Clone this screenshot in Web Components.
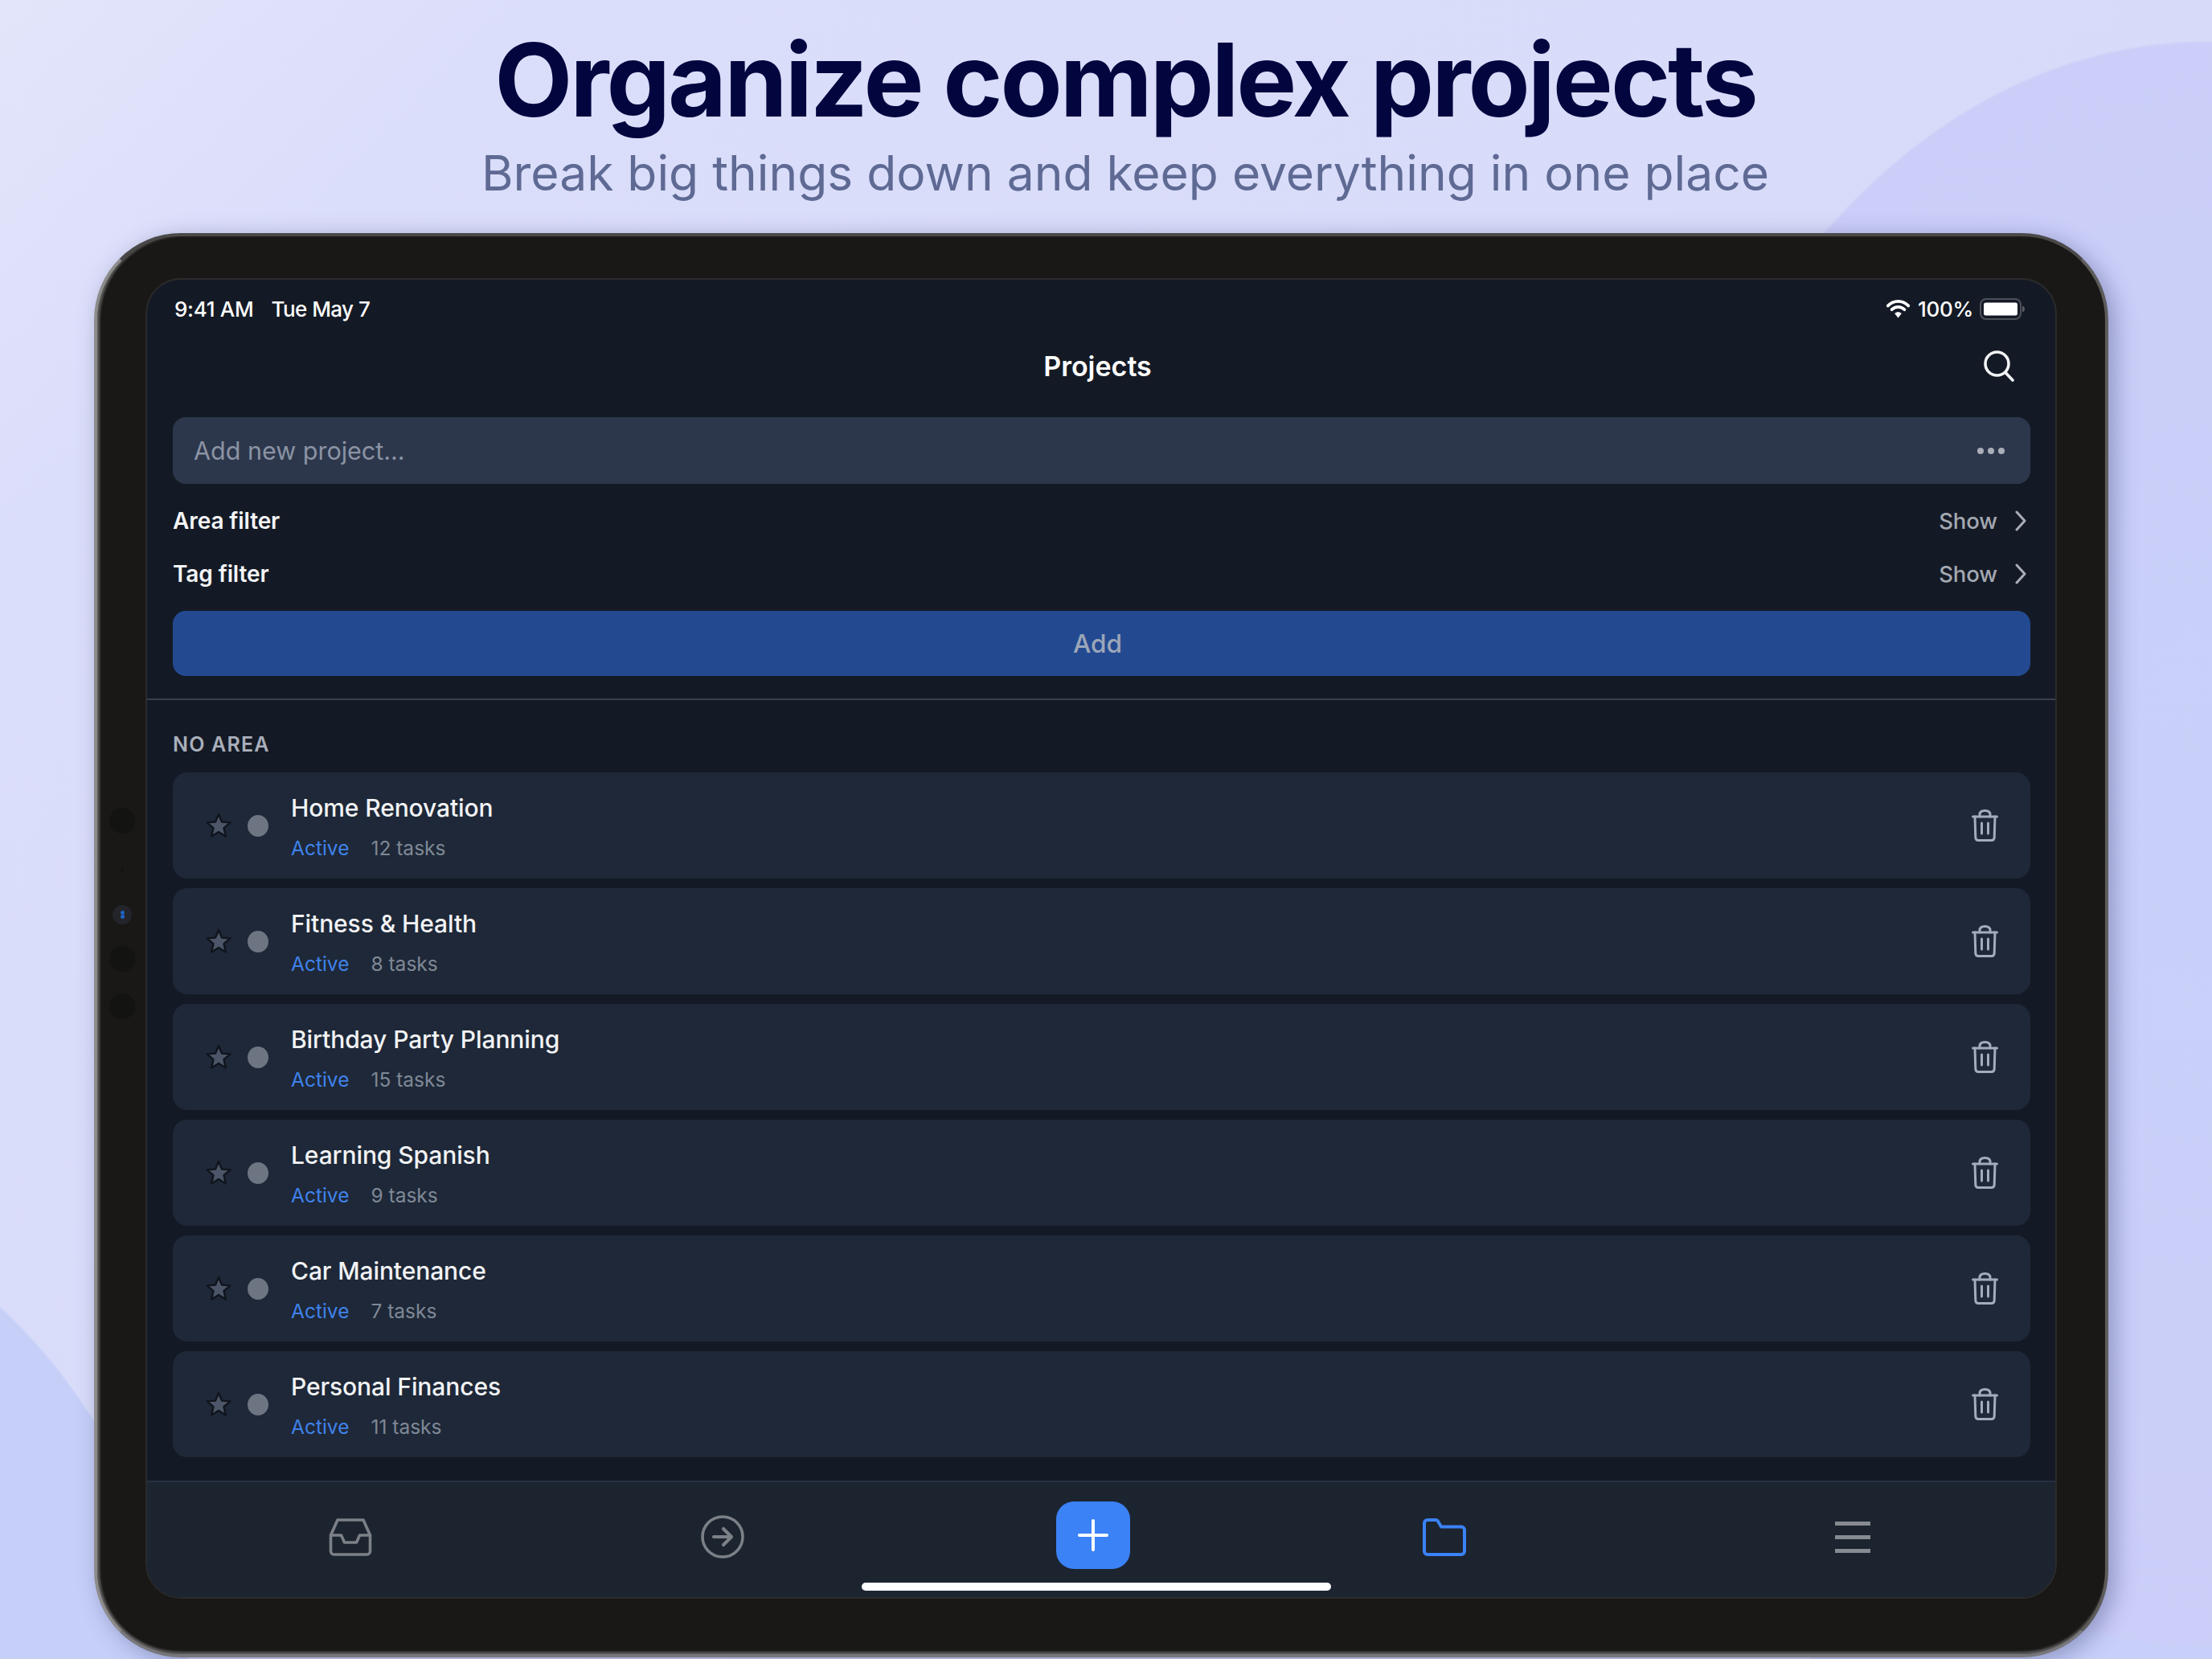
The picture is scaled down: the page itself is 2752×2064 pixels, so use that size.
<!DOCTYPE html>
<html lang="en">
<head>
<meta charset="utf-8">
<title>Organize complex projects</title>
<style>
  html, body { margin: 0; padding: 0; }
  body { width: 2752px; height: 2064px; overflow: hidden; font-family: Inter, "Liberation Sans", sans-serif; }
</style>
</head>
<body>
<promo-page>
  <promo-header slot="header" heading="Organize complex projects" sub="Break big things down and keep everything in one place"></promo-header>
  <tablet-frame>
    <status-bar></status-bar>
    <nav-header heading="Projects"></nav-header>
    <new-project-input placeholder="Add new project..."></new-project-input>
    <filter-row label="Area filter" style="margin-top:13px"></filter-row>
    <filter-row label="Tag filter"></filter-row>
    <add-button>Add</add-button>
    <section-label>NO AREA</section-label>
    <project-list>
      <project-card name="Home Renovation" tasks="12 tasks"></project-card>
      <project-card name="Fitness &amp; Health" tasks="8 tasks"></project-card>
      <project-card name="Birthday Party Planning" tasks="15 tasks"></project-card>
      <project-card name="Learning Spanish" tasks="9 tasks"></project-card>
      <project-card name="Car Maintenance" tasks="7 tasks"></project-card>
      <project-card name="Personal Finances" tasks="11 tasks"></project-card>
    </project-list>
    <tab-bar></tab-bar>
  </tablet-frame>
</promo-page>

<script>
function define(name, html) {
    customElements.define(name, class extends HTMLElement {
        constructor() {
            super();
            this.attachShadow({ mode: 'open' });
        }
        connectedCallback() {
            this.shadowRoot.innerHTML = typeof html === 'function' ? html(this) : html;
        }
    });
}

define('promo-page', `
    <style>
        :host {
            display: block;
            width: 2752px;
            height: 2064px;
            overflow: hidden;
            background:
                radial-gradient(ellipse 735px 1000px at 2745px 1050px, #c8d0f9 0, #cbcef8 99.6%, transparent 100%),
                linear-gradient(#c8d0f9, #c8d0f9) right bottom / 500px 1000px no-repeat,
                radial-gradient(ellipse 560px 800px at -300px 2300px, #c5cff8 0 99.6%, transparent 100%),
                linear-gradient(135deg, #e3e5fb 0%, #dbdefa 14%, #d7dbf9 60%, #d5daf9 100%);
        }
    </style>
    <slot name="header"></slot>
    <slot></slot>
`);

define('promo-header', el => `
    <style>
        :host {
            display: block;
            height: 290px;
            padding-left: 48px;
            text-align: center;
            box-sizing: border-box;
            font-family: Inter, "Liberation Sans", sans-serif;
        }
        h1 {
            margin: 0;
            padding-top: 26px;
            font-size: 126px;
            line-height: 146px;
            font-weight: 700;
            letter-spacing: -3px;
            color: #03053f;
        }
        p {
            margin: 8px 0 0;
            font-size: 60.5px;
            line-height: 70px;
            color: #5f6a94;
        }
    </style>
    <h1>${el.getAttribute('heading')}</h1>
    <p>${el.getAttribute('sub')}</p>
`);

define('tablet-frame', `
    <style>
        :host {
            display: block;
            position: relative;
            box-sizing: border-box;
            width: 2506px;
            height: 1772px;
            margin-left: 117px;
            padding: 52px 60px 69px 60px;
            background: #191816;
            border: 4px solid #5d5c5a;
            border-left-color: #8d8c8c;
            border-top-color: #4a4948;
            border-bottom-color: #77767a;
            border-radius: 108px;
            box-shadow:
                8px 6px 28px rgba(70, 78, 130, .45),
                inset 4px 0 3px -1px #5c5b5a,
                inset 0 -5px 3px -2px #5c5b5c;
            font-family: Inter, "Liberation Sans", sans-serif;
        }
        .screen {
            box-sizing: border-box;
            height: 100%;
            display: flex;
            flex-direction: column;
            position: relative;
            overflow: hidden;
            background: #141a25;
            border: 2px solid #2b2b2c;
            border-radius: 44px;
        }
        .sensor {
            position: absolute;
            left: 15px;
            width: 32px;
            height: 32px;
            border-radius: 50%;
            background: #131312;
        }
        .pin {
            position: absolute;
            left: 29px;
            top: 787px;
            width: 4px;
            height: 4px;
            border-radius: 50%;
            background: #121211;
        }
        .lens {
            position: absolute;
            left: 19px;
            top: 832px;
            width: 24px;
            height: 24px;
            border-radius: 50%;
            background: #24252a;
            display: flex;
            flex-direction: column;
            align-items: center;
            justify-content: center;
        }
        .lens i { width: 5px; height: 5px; border-radius: 50%; background: #1f62c4; }
    </style>
    <div class="sensor" style="top:711px"></div>
    <div class="pin"></div>
    <div class="lens"><i></i><i></i></div>
    <div class="sensor" style="top:883px"></div>
    <div class="sensor" style="top:942px"></div>
    <div class="screen"><slot></slot></div>
`);

define('status-bar', `
    <style>
        :host {
            display: flex;
            align-items: center;
            box-sizing: border-box;
            height: 72px;
            padding: 0 38px 0 34px;
            color: #fff;
            font-size: 26px;
            font-weight: 500;
            letter-spacing: -.3px;
            flex: none;
        }
        .date { margin-left: 22px; letter-spacing: -.55px; }
        .right { margin-left: auto; display: flex; align-items: center; }
        .pct { margin: 0 8px 0 10px; }
        svg { display: block; }
    </style>
    <span>9:41 AM</span><span class="date">Tue May 7</span>
    <span class="right">
        <svg width="29" height="24" viewBox="0 0 29 24" fill="none" stroke="#fff" stroke-width="3.800" stroke-linecap="round">
            <path d="M1.800 8.400C9 1 20 1 27.200 8.400"/>
            <path d="M6.600 13.200C11 8.800 18 8.800 22.400 13.200"/>
            <path d="M14.500 23.500L10.200 18c2.400-2.400 6.200-2.400 8.600 0Z" fill="#fff" stroke="none"/>
        </svg>
        <span class="pct">100%</span>
        <svg width="56" height="27" viewBox="0 0 56 27">
            <rect x="1" y="1" width="50" height="25" rx="7" fill="none" stroke="#4d5058" stroke-width="2"/>
            <rect x="5" y="5.500" width="42" height="16" rx="2.500" fill="#fff"/>
            <path d="M53 9.500c2 .8 3 2.200 3 4s-1 3.200-3 4Z" fill="#5a5d64"/>
        </svg>
    </span>
`);

define('nav-header', el => `
    <style>
        :host {
            display: flex;
            align-items: center;
            flex: none;
            height: 70px;
            padding: 0 50px 0 81px;
            color: #fff;
            font-size: 34px;
            font-weight: 600;
        }
        .title { flex: 1; text-align: center; }
        svg { display: block; }
    </style>
    <span class="title">${el.getAttribute('heading')}</span>
    <svg width="40" height="40" viewBox="0 0 40 40" fill="none" stroke="#f2f3f5" stroke-width="3.600" stroke-linecap="round">
        <circle cx="17.500" cy="17.500" r="14.500"/>
        <path d="M28 28.500L37 38"/>
    </svg>
`);

define('new-project-input', el => `
    <style>
        :host {
            display: flex;
            align-items: center;
            flex: none;
            box-sizing: border-box;
            height: 83px;
            margin: 29px 31px 0 32px;
            padding: 0 32px 0 26px;
            background: #2c374c;
            border-radius: 16px;
            color: #8b93a3;
            font-size: 30.500px;
        }
        .ph { flex: 1; }
        .dots { display: flex; gap: 5px; }
        .dots i { width: 8px; height: 8px; border-radius: 50%; background: #a9aeb9; }
    </style>
    <span class="ph">${el.getAttribute('placeholder')}</span>
    <span class="dots"><i></i><i></i><i></i></span>
`);

define('filter-row', el => `
    <style>
        :host {
            display: flex;
            align-items: center;
            flex: none;
            height: 66px;
            margin: 0 36px 0 32px;
            color: #f4f5f7;
            font-size: 28px;
            font-weight: 600;
            letter-spacing: -.1px;
        }
        .label { flex: 1; }
        .show { color: #a3a8b2; font-size: 27.500px; font-weight: 500; margin-right: 22px; }
        svg { display: block; }
    </style>
    <span class="label">${el.getAttribute('label')}</span>
    <span class="show">Show</span>
    <svg width="14" height="26" viewBox="0 0 14 26" fill="none" stroke="#a9adb6" stroke-width="3" stroke-linecap="round" stroke-linejoin="round">
        <path d="M2 2l10 11L2 24"/>
    </svg>
`);

define('add-button', `
    <style>
        :host {
            display: flex;
            align-items: center;
            justify-content: center;
            flex: none;
            box-sizing: border-box;
            height: 81px;
            margin: 13px 31px 28px 32px;
            padding-right: 10px;
            background: #234a91;
            border-radius: 16px;
            color: #9ca6b9;
            font-size: 31.500px;
            font-weight: 500;
        }
    </style>
    <slot></slot>
`);

define('section-label', `
    <style>
        :host {
            display: block;
            flex: none;
            box-sizing: border-box;
            height: 92px;
            padding: 40px 32px 0;
            border-top: 2px solid #3a404b;
            color: #a9afbb;
            font-size: 25px;
            line-height: 30px;
            font-weight: 600;
            letter-spacing: 1.200px;
        }
    </style>
    <slot></slot>
`);

define('project-list', `
    <style>
        :host {
            display: flex;
            flex-direction: column;
            gap: 12px;
            flex: none;
            margin: 0 31px 0 32px;
        }
    </style>
    <slot></slot>
`);

define('project-card', el => `
    <style>
        :host {
            display: flex;
            align-items: center;
            box-sizing: border-box;
            height: 132px;
            padding: 0 40px 0 40px;
            background: #1e2838;
            border-radius: 18px;
            color: #f2f3f5;
        }
        svg { display: block; flex: none; }
        .dot { flex: none; width: 26px; height: 27px; margin: 0 28px 0 19px; border-radius: 50%; background: #6e7582; }
        .body { flex: 1; display: flex; flex-direction: column; gap: 14.500px; margin-top: 2.500px; }
        .name { font-size: 30px; line-height: 38px; font-weight: 500; letter-spacing: -.1px; }
        .meta { display: flex; gap: 27px; font-size: 24.500px; line-height: 32px; }
        .state { color: #3f82ea; }
        .tasks { color: #7f8896; }
    </style>
    <svg width="34" height="34" viewBox="0 0 34 34">
        <path d="M17 3l4 9.600 10.400.8-7.900 6.800 2.400 10.200L17 24.900 8.100 30.400l2.400-10.200L2.600 13.400l10.400-.8Z" fill="#4c5668" stroke="#10141c" stroke-width="2.400" stroke-linejoin="round"/>
    </svg>
    <span class="dot"></span>
    <span class="body">
        <span class="name">${el.getAttribute('name').replace('&', '&amp;')}</span>
        <span class="meta"><span class="state">Active</span><span class="tasks">${el.getAttribute('tasks')}</span></span>
    </span>
    <svg width="33" height="40" viewBox="0 0 33 40" fill="none" stroke="#a2acbd" stroke-width="3" stroke-linecap="round" stroke-linejoin="round">
        <path d="M1.500 9h30"/>
        <path d="M10 9V6.500C10 3.200 12 1.500 16.500 1.500S23 3.200 23 6.500V9"/>
        <path d="M4 9l.8 26c.1 2.400 1.500 3.500 3.700 3.500h16c2.200 0 3.600-1.100 3.700-3.500L29 9"/>
        <path d="M12.500 17v13M20.500 17v13"/>
    </svg>
`);

define('tab-bar', `
    <style>
        :host {
            display: flex;
            align-items: center;
            flex: none;
            position: relative;
            box-sizing: border-box;
            height: 147px;
            margin-top: 29px;
            padding: 0 0 9px 226px;
            background: #1c2430;
            border-top: 2px solid #253042;
        }
        svg { display: block; flex: none; }
        .plus {
            flex: none;
            width: 92px;
            height: 84px;
            margin: -4px 364px 0 388px;
            border-radius: 22px;
            background: #3b82f6;
            display: flex;
            align-items: center;
            justify-content: center;
        }
        .home {
            position: absolute;
            left: 889px;
            bottom: 10px;
            width: 584px;
            height: 10px;
            border-radius: 5px;
            background: #fff;
        }
    </style>
    <svg width="54" height="47" viewBox="0 0 54 47" fill="none" stroke="#7c8087" stroke-width="3.600" stroke-linejoin="round" stroke-linecap="round">
        <path d="M11 2h32l8.500 19v20a4 4 0 0 1-4 4h-41a4 4 0 0 1-4-4V21Z"/>
        <path d="M2.500 21h13l4 9h15l4-9h13"/>
    </svg>
    <svg width="54" height="54" viewBox="0 0 54 54" fill="none" stroke="#7c8087" stroke-width="3.600" stroke-linecap="round" stroke-linejoin="round" style="margin-left:409px">
        <circle cx="27" cy="27" r="25"/>
        <path d="M16 27h22M28 17l10 10-10 10" stroke-width="4.200"/>
    </svg>
    <span class="plus">
        <svg width="38" height="40" viewBox="0 0 38 40" stroke="#fff" stroke-width="4" stroke-linecap="round">
            <path d="M19 2v36M2 20h34"/>
        </svg>
    </span>
    <svg width="54" height="47" viewBox="0 0 54 47" fill="none" stroke="#3b82f6" stroke-width="4" stroke-linejoin="round">
        <path d="M2 41V6a4 4 0 0 1 4-4h10c1.500 0 2.500.6 3.200 2L23 10.500h25a4 4 0 0 1 4 4V41a4 4 0 0 1-4 4H6a4 4 0 0 1-4-4Z"/>
    </svg>
    <svg width="44" height="39" viewBox="0 0 44 39" stroke="#868a91" stroke-width="5" style="margin-left:459px">
        <path d="M0 2.500h44M0 19.500h44M0 36.500h44"/>
    </svg>
    <span class="home"></span>
`);
</script>
</body>
</html>
